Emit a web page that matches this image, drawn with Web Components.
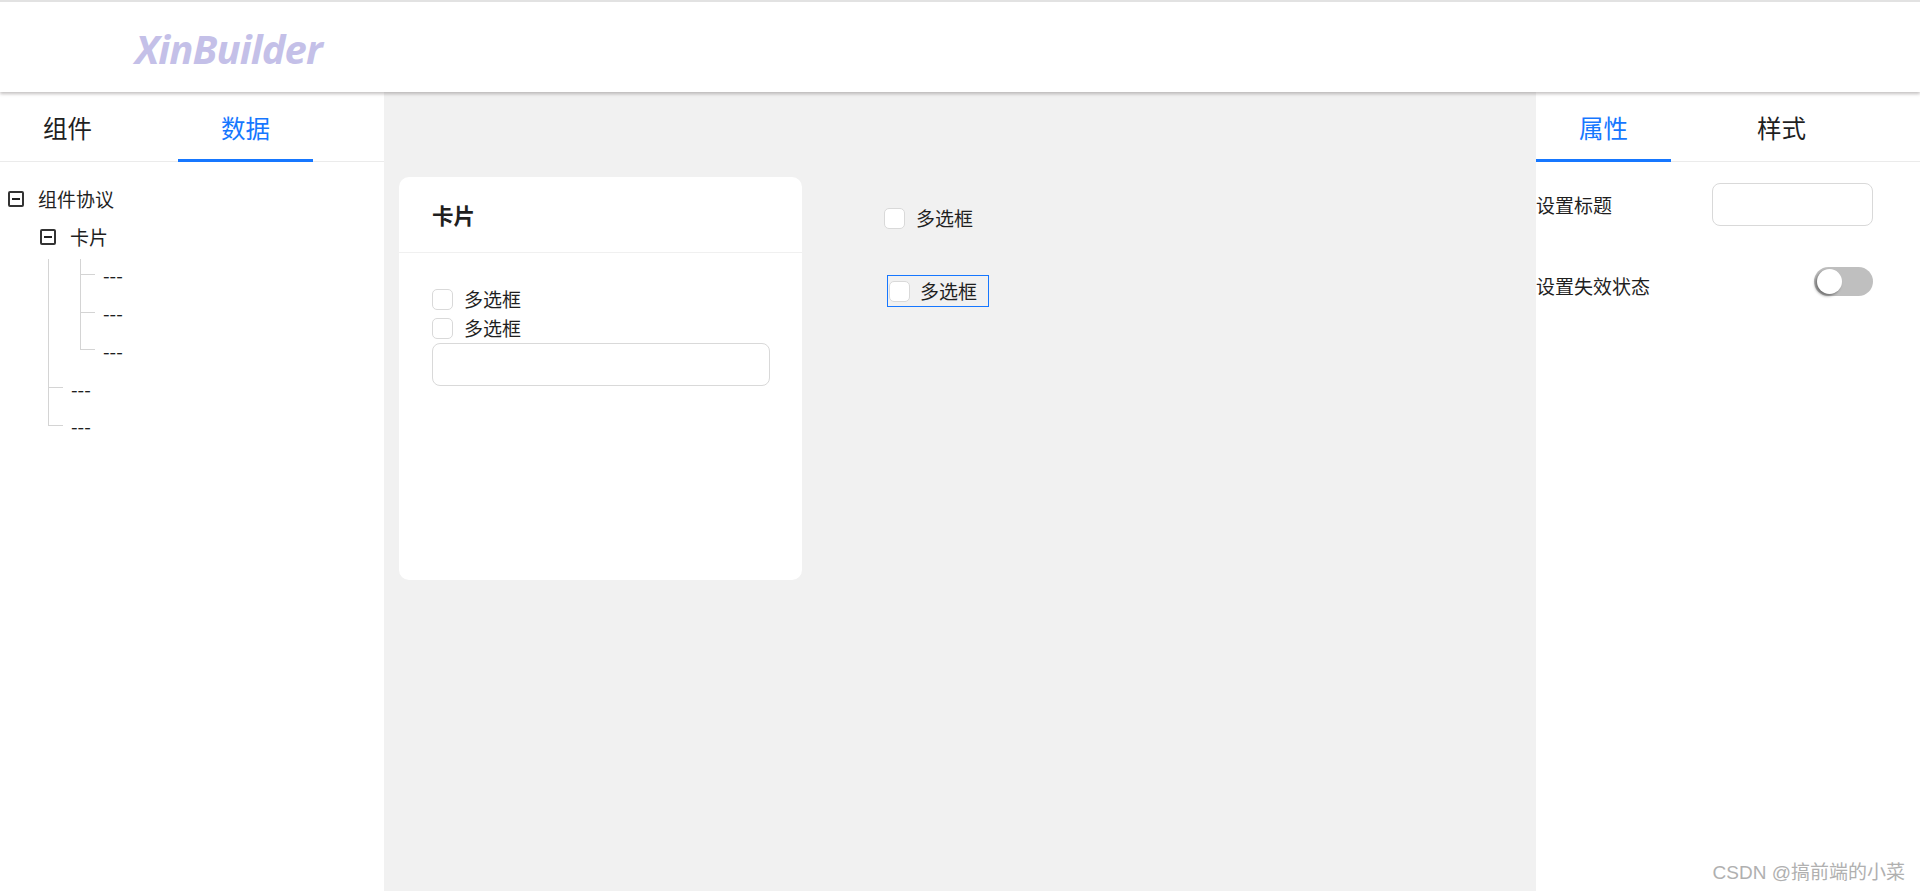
<!DOCTYPE html>
<html lang="zh"><head><meta charset="utf-8"><title>XinBuilder</title>
<style>
html,body{margin:0;height:100%;overflow:hidden}
body{font-family:"Noto Sans CJK SC","Liberation Sans",sans-serif;font-size:19px;color:#1f1f1f;background:#f1f1f1;display:flex;flex-direction:column}
</style></head><body>
<xb-header>XinBuilder</xb-header>
<xb-main>
  <xb-panel slot="left">
    <xb-tabs first="组件" second="数据" active="1"></xb-tabs>
    <xb-tree>
      <xb-node label="组件协议" toggle>
        <xb-node label="卡片" toggle>
          <xb-node label="---"></xb-node><xb-node label="---"></xb-node><xb-node label="---"></xb-node>
        </xb-node>
        <xb-node label="---"></xb-node><xb-node label="---"></xb-node>
      </xb-node>
    </xb-tree>
  </xb-panel>
  <xb-canvas slot="center">
    <xb-card title="卡片" style="left:15px;top:85px">
      <xb-check>多选框</xb-check><xb-check>多选框</xb-check><xb-input style="width:338px"></xb-input>
    </xb-card>
    <xb-check style="position:absolute;left:500px;top:114px">多选框</xb-check>
    <xb-check selected style="position:absolute;left:503px;top:183px">多选框</xb-check>
  </xb-canvas>
  <xb-panel slot="right">
    <xb-tabs first="属性" second="样式" active="0"></xb-tabs>
    <xb-props>
      <xb-prop label="设置标题" style="height:43px;margin-top:21px"><xb-input style="width:161px"></xb-input></xb-prop>
      <xb-prop label="设置失效状态" drop style="height:29px;margin-top:41px"><xb-switch></xb-switch></xb-prop>
    </xb-props>
  </xb-panel>
</xb-main>
<xb-mark>CSDN @搞前端的小菜</xb-mark>
<script>
function def(name, css, html){
  customElements.define(name, class extends HTMLElement{
    connectedCallback(){
      if(this.shadowRoot) return;
      const r=this.attachShadow({mode:'open'});
      r.innerHTML='<style>'+css+'</style>'+(typeof html==='function'?html(this):html);
    }
  });
}
def('xb-header',`:host{display:flex;align-items:center;flex:none;height:90px;border-top:2px solid #e2e2e2;background:#fff;box-shadow:0 2px 3px rgba(90,80,80,.35);position:relative;z-index:2;padding-left:135px}
 span{font:italic 700 40px "Open Sans",sans-serif;color:#c4c0e8;letter-spacing:-.9px;line-height:1;position:relative;top:2px}`,'<span><slot></slot></span>');
def('xb-main',`:host{display:flex;flex:1;min-height:0}
 .l,.r{width:384px;flex:none;background:#fff}.c{flex:1;position:relative}`,
 '<div class="l"><slot name="left"></slot></div><div class="c"><slot name="center"></slot></div><div class="r"><slot name="right"></slot></div>');
def('xb-panel',`:host{display:block;height:100%}`,'<slot></slot>');
def('xb-canvas',`:host{display:block;height:100%;position:relative}`,'<slot></slot>');
def('xb-tabs',`:host{display:flex;gap:43px;height:70px;box-sizing:border-box;border-bottom:1px solid #ebebeb;font-size:24.5px}
 div{width:135px;height:70px;box-sizing:border-box;display:flex;align-items:center;justify-content:center}
 .on{color:#1677ff;border-bottom:3px solid #1677ff;padding-top:3px}`,
 h=>{const a=h.getAttribute('active');return `<div class="${a==='0'?'on':''}">${h.getAttribute('first')}</div><div class="${a==='1'?'on':''}">${h.getAttribute('second')}</div>`});
def('xb-tree',`:host{display:block;padding:18px 0 0 8px}`,'<slot></slot>');
def('xb-node',`:host{display:block;position:relative}
 .row{height:37.85px;display:flex;align-items:center;white-space:nowrap;line-height:1;position:relative}
 .box{width:16px;height:16px;box-sizing:border-box;border:2px solid #333;border-radius:2px;margin-right:14px;display:flex;align-items:center;justify-content:center;flex:none}
 .box i{width:8px;height:2px;background:#222}
 .kids{padding-left:32px;position:relative}
 :host(:not([toggle])) .row{padding-left:31px}
 :host(:not([toggle])) .row::before{content:"";position:absolute;left:8px;top:0;width:14px;height:18px;border-left:1px solid #d4d4d4;border-bottom:1px solid #d4d4d4}
 :host(:not([toggle]):first-of-type) .row::before{top:3px;height:15px}
 :host(:not([toggle]):not(:last-of-type)) .row::after{content:"";position:absolute;left:8px;top:18px;bottom:0;border-left:1px solid #d4d4d4}
 :host([toggle]:not(:last-of-type):first-of-type) .kids.nested::before{content:"";position:absolute;left:8px;top:3px;bottom:0;border-left:1px solid #d4d4d4}`,
 h=>{const t=h.hasAttribute('toggle');const nested=t&&h.parentElement.tagName==='XB-NODE';
  return `<div class="row">${t?'<span class="box"><i></i></span>':''}<span>${h.getAttribute('label')}</span></div>${t?`<div class="kids${nested?' nested':''}"><slot></slot></div>`:''}`});
def('xb-check',`:host{display:inline-flex;align-items:center;height:24px;line-height:24px;white-space:nowrap;box-sizing:border-box}
 i{width:21px;height:21px;box-sizing:border-box;background:#fff;border:1px solid #d9d9d9;border-radius:5px;margin-right:11px;flex:none}
 :host([selected]){height:32px;padding:0 11px 0 1px;border:1px solid #1677ff}
 :host([selected]) i{margin-right:10px}`,'<i></i><slot></slot>');
def('xb-input',`:host{display:block;height:43px;box-sizing:border-box;background:#fff;border:1px solid #d9d9d9;border-radius:8px}`,'');
def('xb-card',`:host{position:absolute;display:block;width:403px;height:403px;background:#fff;border-radius:10px}
 header{height:76px;box-sizing:border-box;border-bottom:1px solid #f0f0f0;padding:0 33px;display:flex;align-items:center;font-weight:700;font-size:21.5px;line-height:1}
 .b{padding:34px 33px;display:flex;flex-direction:column;align-items:flex-start;gap:5px}
 ::slotted(xb-input){margin-top:-2px}`,h=>`<header>${h.getAttribute('title')}</header><div class="b"><slot></slot></div>`);
def('xb-props',`:host{display:block;padding-right:47px}`,'<slot></slot>');
def('xb-prop',`:host{display:flex;align-items:center;justify-content:space-between;line-height:1}
 :host([drop]) span{padding-top:7px}`,h=>`<span>${h.getAttribute('label')}</span><slot></slot>`);
def('xb-switch',`:host{display:block;width:59px;height:29px;border-radius:15px;background:#bfbfbf;position:relative}
 i{position:absolute;left:3px;top:2px;width:25px;height:25px;border-radius:50%;background:#fff;box-shadow:-2px 2px 3px rgba(0,0,0,.4)}`,'<i></i>');
def('xb-mark',`:host{position:absolute;right:15px;bottom:6px;z-index:3;font:19px "Liberation Sans","Noto Sans CJK SC",sans-serif;color:#b0b0b0;line-height:1.2}`,'<slot></slot>');
</script>
</body></html>
